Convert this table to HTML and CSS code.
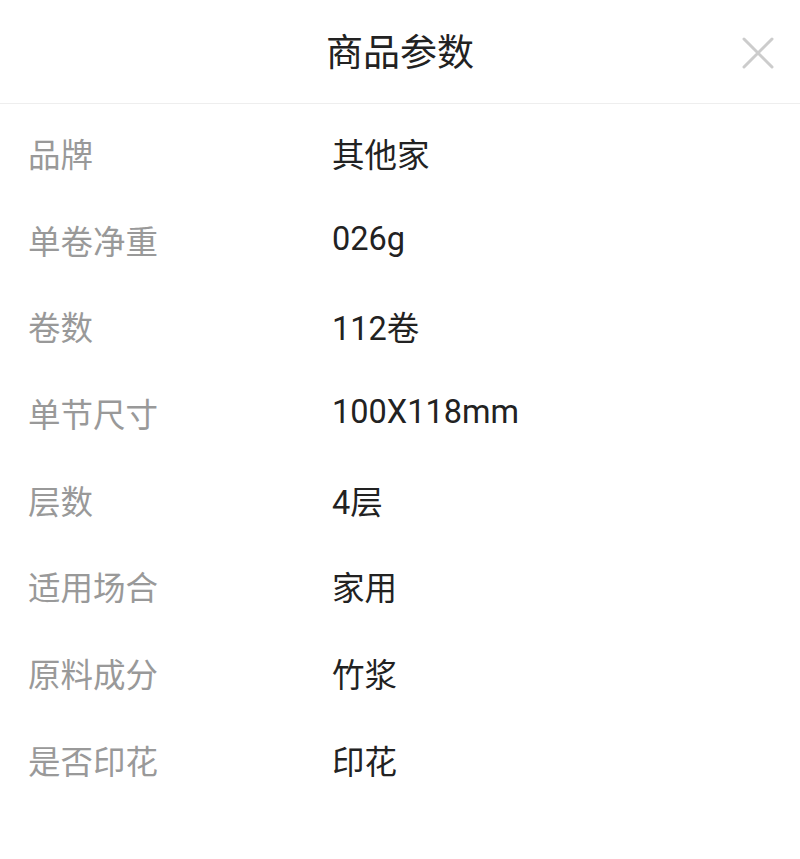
FILE: index.html
```html
<!DOCTYPE html>
<html lang="zh">
<head>
<meta charset="utf-8">
<link rel="stylesheet" href="styles.css">
</head>
<body>
<div class="sheet">
  <header class="head">
    <h1 class="title">商品参数</h1>
    <button class="close" aria-label="关闭">
      <svg width="34" height="34" viewBox="0 0 34 34"><path d="M3 3L31 31M31 3L3 31" stroke="#cccccc" stroke-width="3" stroke-linecap="round" fill="none"/></svg>
    </button>
  </header>
  <div class="list">
    <div class="row"><span class="k">品牌</span><span class="v">其他家</span></div>
    <div class="row"><span class="k">单卷净重</span><span class="v">026g</span></div>
    <div class="row"><span class="k">卷数</span><span class="v">112卷</span></div>
    <div class="row"><span class="k">单节尺寸</span><span class="v">100X118mm</span></div>
    <div class="row"><span class="k">层数</span><span class="v">4层</span></div>
    <div class="row"><span class="k">适用场合</span><span class="v">家用</span></div>
    <div class="row"><span class="k">原料成分</span><span class="v">竹浆</span></div>
    <div class="row"><span class="k">是否印花</span><span class="v">印花</span></div>
  </div>
</div>
</body>
</html>
```
FILE: styles.css
```css
html, body {
  margin: 0;
  padding: 0;
  background: #ffffff;
}
body {
  font-family: Roboto, "Noto Sans CJK SC", sans-serif;
}
.sheet {
  width: 800px;
}
.head {
  position: relative;
  height: 103px;
  border-bottom: 1px solid #eeeeee;
  display: flex;
  align-items: center;
  justify-content: center;
}
.title {
  margin: 0 0 2px;
  font-size: 37px;
  font-weight: 400;
  color: #222222;
  line-height: 1;
  font-family: "Noto Sans CJK SC", sans-serif;
}
.close {
  position: absolute;
  right: 25px;
  top: 36px;
  padding: 0;
  border: 0;
  background: none;
  width: 34px;
  height: 34px;
}
.close svg { display: block; }
.list {
  padding-top: 5px;
}
.row {
  display: flex;
  align-items: center;
  height: 86.7px;
  padding-left: 28px;
  font-size: 32.5px;
}
.k {
  width: 304px;
  color: #999999;
  font-family: "Noto Sans CJK SC", sans-serif;
}
.v {
  color: #222222;
}
```
